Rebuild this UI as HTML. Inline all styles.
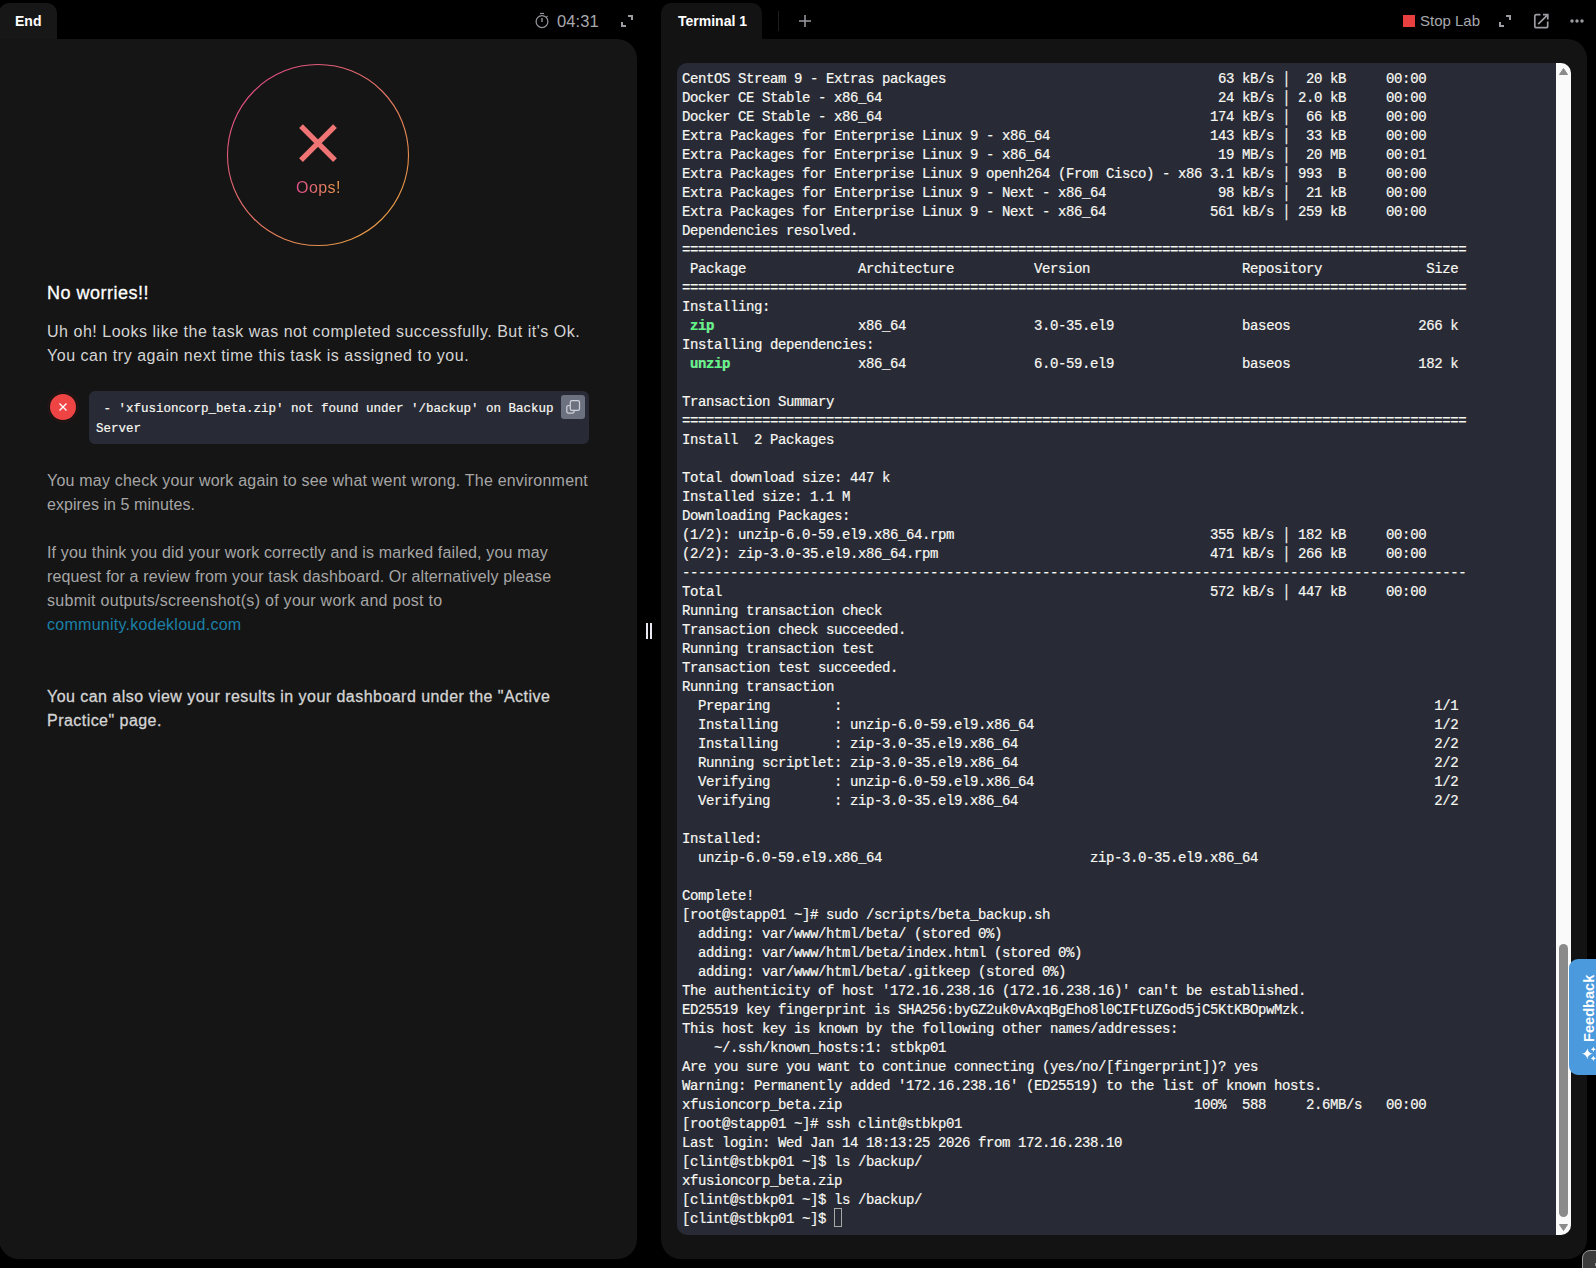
<!DOCTYPE html>
<html><head><meta charset="utf-8">
<style>
*{box-sizing:border-box;margin:0;padding:0}
html,body{width:1596px;height:1268px;overflow:hidden;background:#000;font-family:"Liberation Sans",sans-serif}
.abs{position:absolute}
#ltab{left:-1px;top:3px;width:58px;height:37px;background:#171717;border-radius:10px 10px 0 0}
#ltab span{position:absolute;left:16px;top:9px;font-weight:bold;font-size:14px;color:#fff;line-height:18px}
#lpanel{left:-1px;top:39px;width:638px;height:1220px;background:#151515;border-radius:0 20px 20px 20px}
#timer{left:557px;top:11px;font-size:16.5px;color:#a8a8ae;letter-spacing:0.1px;line-height:20px}
#rtab{left:661px;top:3px;width:101px;height:37px;background:#131313;border-radius:10px 10px 0 0}
#rtab span{position:absolute;left:17px;top:9px;font-weight:bold;font-size:14px;color:#fff;line-height:18px}
#rpanel{left:661px;top:39px;width:926px;height:1220px;background:#131313;border-radius:0 20px 20px 20px}
#term{left:677px;top:63px;width:894px;height:1172px;background:#282a36;border-radius:10px;overflow:hidden}
#term pre{position:absolute;left:5px;top:7px;font-family:"Liberation Mono",monospace;font-size:14px;letter-spacing:-0.4px;line-height:19px;color:#f8f8f2;-webkit-text-stroke:0.2px #f8f8f2}
.g{color:#50fa7b;font-weight:bold}
.cur{display:inline-block;width:8px;height:19px;border:1px solid #a8a8a8;vertical-align:-5px;position:relative;top:-2px}
#sb{left:879px;top:0;width:15px;height:1172px;background:#fafafa}
#thumb{left:882px;top:881px;width:9px;height:273px;background:#8a8a8a;border-radius:5px}
.txt{color:#d4d4d4;font-size:16px;line-height:24px;letter-spacing:0.52px}
.light{color:#a6a6a6;font-size:16px;line-height:24px;letter-spacing:0.21px}
</style></head><body>
<div id="ltab" class="abs"><span>End</span></div>
<div id="lpanel" class="abs"></div>

<!-- timer -->
<svg class="abs" style="left:534px;top:12px" width="16" height="17" viewBox="0 0 16 17">
 <circle cx="8" cy="9.6" r="5.9" fill="none" stroke="#94949c" stroke-width="1.25"/>
 <line x1="6" y1="1.5" x2="10" y2="1.5" stroke="#94949c" stroke-width="1.2"/>
 <line x1="8" y1="6" x2="8" y2="10" stroke="#94949c" stroke-width="1.4"/>
 <line x1="12.3" y1="5.2" x2="13.6" y2="4.1" stroke="#94949c" stroke-width="1.2"/>
</svg>
<div id="timer" class="abs">04:31</div>
<svg class="abs" style="left:620px;top:14px" width="14" height="14" viewBox="0 0 14 14">
 <path d="M8 2H12V6M2 8V12H6" fill="none" stroke="#9c9ca2" stroke-width="2"/>
</svg>

<!-- Oops circle -->
<svg class="abs" style="left:226px;top:63px" width="184" height="184" viewBox="0 0 184 184">
 <defs><linearGradient id="gr" x1="0" y1="0" x2="1" y2="1">
  <stop offset="0" stop-color="#e0408f"/><stop offset="1" stop-color="#e8a838"/></linearGradient>
  <linearGradient id="gt" x1="0" y1="0" x2="1" y2="0">
  <stop offset="0" stop-color="#e04c8c"/><stop offset="1" stop-color="#e89c48"/></linearGradient></defs>
 <circle cx="92" cy="92" r="90.5" fill="none" stroke="url(#gr)" stroke-width="1.1"/>
 <path d="M75 63.2L109 97.2M109 63.2L75 97.2" stroke="#f07474" stroke-width="5.3"/>
</svg>
<div class="abs" style="left:296px;top:178px;font-size:16px;letter-spacing:0.45px;line-height:20px;background:linear-gradient(90deg,#e04c8c,#e89c48);-webkit-background-clip:text;background-clip:text;color:transparent">Oops!</div>

<div class="abs" style="left:47px;top:282px;font-size:18px;line-height:22px;color:#fff;letter-spacing:0.5px;-webkit-text-stroke:0.3px #fff">No worries!!</div>
<div class="abs txt" style="left:47px;top:320px;width:580px">Uh oh! Looks like the task was not completed successfully. But it's Ok.<br>You can try again next time this task is assigned to you.</div>

<!-- error -->
<div class="abs" style="left:47px;top:391px;width:32px;height:32px;border-radius:50%;background:#231515"></div><div class="abs" style="left:49px;top:393px;width:28px;height:28px;border-radius:50%;background:#171313"></div>
<div class="abs" style="left:50px;top:394px;width:26px;height:26px;border-radius:50%;background:#ef4444"></div>
<svg class="abs" style="left:59px;top:403px" width="8" height="8" viewBox="0 0 8 8"><path d="M0.5 0.5L7.5 7.5M7.5 0.5L0.5 7.5" stroke="#fff" stroke-width="1.3"/></svg>
<div class="abs" style="left:89px;top:391px;width:500px;height:53px;background:#282a36;border-radius:6px"></div>
<div class="abs" style="left:96px;top:399px;width:470px;font-family:'Liberation Mono',monospace;font-size:12.5px;line-height:20px;color:#f8f8f2;white-space:pre-wrap;-webkit-text-stroke:0.2px #f8f8f2"> - 'xfusioncorp_beta.zip' not found under '/backup' on Backup
Server</div>
<div class="abs" style="left:561px;top:395px;width:24px;height:24px;background:#6c7180;border-radius:3px"></div>
<svg class="abs" style="left:561px;top:395px" width="24" height="24" viewBox="0 0 24 24">
 <rect x="9.3" y="5.7" width="9.2" height="9.6" rx="1.6" fill="none" stroke="#cfd0d8" stroke-width="1.25"/>
 <path d="M8.7 10.6H7.2Q5.8 10.6 5.8 12V16.6Q5.8 18 7.2 18H11.7Q13.1 18 13.1 16.6V15.3" fill="none" stroke="#cfd0d8" stroke-width="1.25"/>
</svg>

<div class="abs light" style="left:47px;top:469px;width:580px">You may check your work again to see what went wrong. The environment<br><span style="letter-spacing:0.06px">expires in 5 minutes.</span></div>
<div class="abs light" style="left:47px;top:541px;width:580px"><span style="letter-spacing:0.17px">If you think you did your work correctly and is marked failed, you may</span><br><span style="letter-spacing:0.14px">request for a review from your task dashboard. Or alternatively please</span><br><span style="letter-spacing:0.28px">submit outputs/screenshot(s) of your work and post to</span><br><span style="color:#1b80a8;letter-spacing:0.27px">community.kodekloud.com</span></div>
<div class="abs txt" style="left:47px;top:685px;width:580px;letter-spacing:0.46px;-webkit-text-stroke:0.3px #d4d4d4">You can also view your results in your dashboard under the "Active<br>Practice" page.</div>

<!-- splitter -->
<div class="abs" style="left:646px;top:623px;width:2px;height:16px;background:#e8e8f0"></div>
<div class="abs" style="left:650px;top:623px;width:2px;height:16px;background:#e8e8f0"></div>

<!-- right -->
<div id="rtab" class="abs"><span>Terminal 1</span></div>
<div id="rpanel" class="abs"></div>
<div class="abs" style="left:778px;top:11px;width:1px;height:20px;background:#1e1e1e"></div>
<svg class="abs" style="left:798px;top:14px" width="14" height="14" viewBox="0 0 14 14"><path d="M7 1V13M1 7H13" stroke="#9a9aa2" stroke-width="1.5"/></svg>

<div class="abs" style="left:1403px;top:15px;width:12px;height:12px;background:#e84040"></div>
<div class="abs" style="left:1420px;top:11px;font-size:15px;line-height:20px;color:#a8a8ae">Stop Lab</div>
<svg class="abs" style="left:1498px;top:14px" width="14" height="14" viewBox="0 0 14 14">
 <path d="M8 2H12V6M2 8V12H6" fill="none" stroke="#9c9ca2" stroke-width="2"/>
</svg>
<svg class="abs" style="left:1533px;top:13px" width="17" height="17" viewBox="0 0 17 17">
 <path d="M7.5 1.6H3.6Q1.8 1.6 1.8 3.4V12.9Q1.8 14.7 3.6 14.7H12.9Q14.7 14.7 14.7 12.9V8.5" fill="none" stroke="#9c9ca2" stroke-width="1.7"/>
 <path d="M10 1.6H14.8V6.4M14.6 1.8L5.2 11.2" fill="none" stroke="#9c9ca2" stroke-width="1.7"/>
</svg>
<svg class="abs" style="left:1569px;top:18px" width="16" height="6" viewBox="0 0 16 6">
 <circle cx="3" cy="3" r="1.7" fill="#9c9ca2"/><circle cx="8" cy="3" r="1.7" fill="#9c9ca2"/><circle cx="13" cy="3" r="1.7" fill="#9c9ca2"/>
</svg>

<div id="term" class="abs">
<pre>CentOS Stream 9 - Extras packages                                  63 kB/s │  20 kB     00:00
Docker CE Stable - x86_64                                          24 kB/s │ 2.0 kB     00:00
Docker CE Stable - x86_64                                         174 kB/s │  66 kB     00:00
Extra Packages for Enterprise Linux 9 - x86_64                    143 kB/s │  33 kB     00:00
Extra Packages for Enterprise Linux 9 - x86_64                     19 MB/s │  20 MB     00:01
Extra Packages for Enterprise Linux 9 openh264 (From Cisco) - x86 3.1 kB/s │ 993  B     00:00
Extra Packages for Enterprise Linux 9 - Next - x86_64              98 kB/s │  21 kB     00:00
Extra Packages for Enterprise Linux 9 - Next - x86_64             561 kB/s │ 259 kB     00:00
Dependencies resolved.
==================================================================================================
 Package              Architecture          Version                   Repository             Size
==================================================================================================
Installing:
 <b class="g">zip</b>                  x86_64                3.0-35.el9                baseos                266 k
Installing dependencies:
 <b class="g">unzip</b>                x86_64                6.0-59.el9                baseos                182 k

Transaction Summary
==================================================================================================
Install  2 Packages

Total download size: 447 k
Installed size: 1.1 M
Downloading Packages:
(1/2): unzip-6.0-59.el9.x86_64.rpm                                355 kB/s │ 182 kB     00:00
(2/2): zip-3.0-35.el9.x86_64.rpm                                  471 kB/s │ 266 kB     00:00
--------------------------------------------------------------------------------------------------
Total                                                             572 kB/s │ 447 kB     00:00
Running transaction check
Transaction check succeeded.
Running transaction test
Transaction test succeeded.
Running transaction
  Preparing        :                                                                          1/1
  Installing       : unzip-6.0-59.el9.x86_64                                                  1/2
  Installing       : zip-3.0-35.el9.x86_64                                                    2/2
  Running scriptlet: zip-3.0-35.el9.x86_64                                                    2/2
  Verifying        : unzip-6.0-59.el9.x86_64                                                  1/2
  Verifying        : zip-3.0-35.el9.x86_64                                                    2/2

Installed:
  unzip-6.0-59.el9.x86_64                          zip-3.0-35.el9.x86_64

Complete!
[root@stapp01 ~]# sudo /scripts/beta_backup.sh
  adding: var/www/html/beta/ (stored 0%)
  adding: var/www/html/beta/index.html (stored 0%)
  adding: var/www/html/beta/.gitkeep (stored 0%)
The authenticity of host '172.16.238.16 (172.16.238.16)' can't be established.
ED25519 key fingerprint is SHA256:byGZ2uk0vAxqBgEho8l0CIFtUZGod5jC5KtKBOpwMzk.
This host key is known by the following other names/addresses:
    ~/.ssh/known_hosts:1: stbkp01
Are you sure you want to continue connecting (yes/no/[fingerprint])? yes
Warning: Permanently added '172.16.238.16' (ED25519) to the list of known hosts.
xfusioncorp_beta.zip                                            100%  588     2.6MB/s   00:00
[root@stapp01 ~]# ssh clint@stbkp01
Last login: Wed Jan 14 18:13:25 2026 from 172.16.238.10
[clint@stbkp01 ~]$ ls /backup/
xfusioncorp_beta.zip
[clint@stbkp01 ~]$ ls /backup/
[clint@stbkp01 ~]$ </pre>
<div class="abs" style="left:157px;top:1145px;width:8px;height:19px;border:1px solid #a8a8a8"></div>
<div id="sb" class="abs"></div>
<div id="thumb" class="abs"></div>
<svg class="abs" style="left:881px;top:4px" width="11" height="9" viewBox="0 0 11 9"><path d="M1.5 7.5L5.5 1.5L9.5 7.5Z" fill="#8a8a8a" stroke="#8a8a8a" stroke-linejoin="round"/></svg>
<svg class="abs" style="left:881px;top:1160px" width="11" height="9" viewBox="0 0 11 9"><path d="M1.5 1.5L5.5 7.5L9.5 1.5Z" fill="#8a8a8a" stroke="#8a8a8a" stroke-linejoin="round"/></svg>
</div>

<!-- feedback -->
<div class="abs" style="left:1569px;top:959px;width:40px;height:116px;background:#4b9ade;border-radius:9px 0 0 9px"></div>
<div class="abs" style="left:1580px;top:1042px;transform-origin:0 0;transform:rotate(-90deg);font-weight:bold;font-size:14.6px;line-height:18px;color:#fff;white-space:nowrap">Feedback</div>
<svg class="abs" style="left:1580px;top:1045px" width="16" height="18" viewBox="0 0 16 18">
 <path d="M7.3 3.3Q8 8.1 12.8 8.8Q8 9.5 7.3 14.3Q6.6 9.5 1.8 8.8Q6.6 8.1 7.3 3.3Z" fill="#fff"/>
 <path d="M13.4 1.7Q13.8 3.9 16 4.3Q13.8 4.7 13.4 6.9Q13 4.7 10.8 4.3Q13 3.9 13.4 1.7Z" fill="#fff"/>
 <path d="M13.4 10.8Q13.8 13 16 13.4Q13.8 13.8 13.4 16Q13 13.8 10.8 13.4Q13 13 13.4 10.8Z" fill="#fff"/>
</svg>
<div class="abs" style="left:1582px;top:1250px;width:30px;height:30px;background:#3c3c3c;border:1px solid #9a9a9a;border-radius:8px"></div><div class="abs" style="left:1595px;top:1263px;width:3px;height:3px;background:#999"></div>
</body></html>
